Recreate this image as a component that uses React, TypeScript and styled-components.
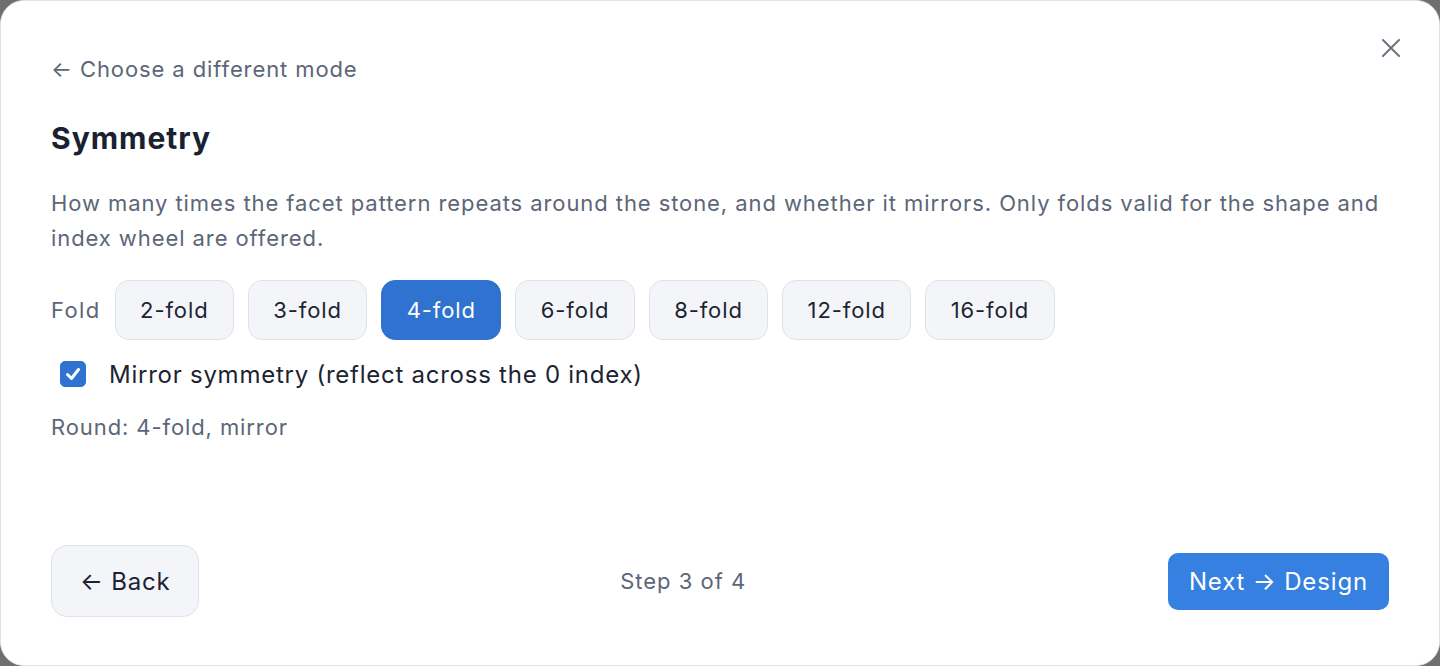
import React, { useState } from 'react'
import styled, { createGlobalStyle, css } from 'styled-components'

const GlobalStyle = createGlobalStyle`
  html, body {
    margin: 0;
    padding: 0;
    height: 100%;
    background: #6f6f72;
  }
  #root {
    height: 100%;
  }
  * {
    box-sizing: border-box;
  }
`

const Modal = styled.div`
  position: relative;
  display: flex;
  flex-direction: column;
  height: 100vh;
  padding: 52px 50px 48px;
  background: #ffffff;
  border: 1px solid #e1e2ea;
  border-radius: 24px;
  font-family: Inter, 'Noto Sans', sans-serif;
  letter-spacing: 0.9px;
  color: #1c2433;
`

const CloseButton = styled.button`
  position: absolute;
  top: 36px;
  right: 37px;
  width: 22px;
  height: 22px;
  padding: 0;
  border: none;
  background: none;
  color: #6b7280;
  display: flex;
  align-items: center;
  justify-content: center;
  cursor: pointer;
`

const BackLink = styled.a`
  align-self: flex-start;
  font-size: 22px;
  line-height: 32px;
  color: #5c6678;
  text-decoration: none;
  cursor: pointer;
`

const Title = styled.h2`
  margin: 33px 0 0;
  font-size: 30px;
  line-height: 40px;
  font-weight: 700;
  letter-spacing: 1px;
  color: #1a2130;
`

const Description = styled.p`
  margin: 28px 0 0;
  font-size: 22px;
  line-height: 35px;
  letter-spacing: 0.92px;
  color: #5c6678;
`

const FoldRow = styled.div`
  display: flex;
  align-items: center;
  gap: 14px;
  margin-top: 24px;
`

const FoldLabel = styled.span`
  font-size: 22px;
  letter-spacing: 1.4px;
  color: #5c6678;
`

const FoldButton = styled.button<{ active: boolean }>`
  ${({ active }) => css`
    height: 60px;
    padding: 0 24.4px;
    border-radius: 14px;
    font-family: inherit;
    font-size: 22px;
    letter-spacing: 0.9px;
    cursor: pointer;
    border: 1.5px solid ${active ? '#2f72cf' : '#dfe2e8'};
    background: ${active ? '#2f72cf' : '#f3f5f9'};
    color: ${active ? '#ffffff' : '#1c2433'};
  `}
`

const CheckRow = styled.label`
  display: flex;
  align-items: center;
  gap: 23px;
  margin-top: 18px;
  padding-left: 9px;
  height: 32px;
  font-size: 24px;
  letter-spacing: 0.75px;
  color: #1c2433;
  cursor: pointer;
`

const CheckBox = styled.span<{ checked: boolean }>`
  width: 26px;
  height: 26px;
  border-radius: 5px;
  display: flex;
  align-items: center;
  justify-content: center;
  background: ${({ checked }) => (checked ? '#2f72cf' : '#ffffff')};
  border: 1.5px solid ${({ checked }) => (checked ? '#2f72cf' : '#9aa1ad')};
`

const Summary = styled.div`
  margin-top: 22px;
  font-size: 22px;
  line-height: 30px;
  color: #5c6678;
`

const Footer = styled.div`
  margin-top: auto;
  display: flex;
  align-items: center;
  justify-content: space-between;
`

const GhostButton = styled.button`
  height: 72px;
  padding: 0 27px 0 28px;
  border-radius: 16px;
  border: 1.5px solid #dfe2e8;
  background: #f3f5f9;
  font-family: inherit;
  font-size: 24px;
  letter-spacing: 0.8px;
  color: #1c2433;
  cursor: pointer;
`

const StepText = styled.span`
  font-size: 22px;
  letter-spacing: 1px;
  color: #5c6678;
`

const PrimaryButton = styled.button`
  height: 57px;
  padding: 0 21px;
  border-radius: 10px;
  border: none;
  background: #3580e0;
  font-family: inherit;
  font-size: 24px;
  letter-spacing: 0.85px;
  color: #ffffff;
  cursor: pointer;
`

const folds = [2, 3, 4, 6, 8, 12, 16]

const CloseIcon = () => (
  <svg width="18" height="18" viewBox="0 0 18 18" fill="none">
    <path
      d="M1 1L17 17M17 1L1 17"
      stroke="currentColor"
      strokeWidth="2"
      strokeLinecap="round"
    />
  </svg>
)

const CheckIcon = () => (
  <svg width="18" height="18" viewBox="0 0 18 18" fill="none">
    <path
      d="M3.5 9.5L7.5 13.5L14.5 4.5"
      stroke="#ffffff"
      strokeWidth="3"
      strokeLinecap="round"
      strokeLinejoin="round"
    />
  </svg>
)

export default function App() {
  const [fold, setFold] = useState(4)
  const [mirror, setMirror] = useState(true)

  return (
    <>
      <GlobalStyle />
      <Modal>
        <CloseButton aria-label="Close">
          <CloseIcon />
        </CloseButton>
        <BackLink>← Choose a different mode</BackLink>
        <Title>Symmetry</Title>
        <Description>
          How many times the facet pattern repeats around the stone, and whether it
          mirrors. Only folds valid for the shape and index wheel are offered.
        </Description>
        <FoldRow>
          <FoldLabel>Fold</FoldLabel>
          {folds.map((n) => (
            <FoldButton key={n} active={n === fold} onClick={() => setFold(n)}>
              {n}-fold
            </FoldButton>
          ))}
        </FoldRow>
        <CheckRow onClick={() => setMirror(!mirror)}>
          <CheckBox checked={mirror}>{mirror && <CheckIcon />}</CheckBox>
          Mirror symmetry (reflect across the 0 index)
        </CheckRow>
        <Summary>
          Round: {fold}-fold{mirror ? ', mirror' : ''}
        </Summary>
        <Footer>
          <GhostButton>← Back</GhostButton>
          <StepText>Step 3 of 4</StepText>
          <PrimaryButton>Next → Design</PrimaryButton>
        </Footer>
      </Modal>
    </>
  )
}
